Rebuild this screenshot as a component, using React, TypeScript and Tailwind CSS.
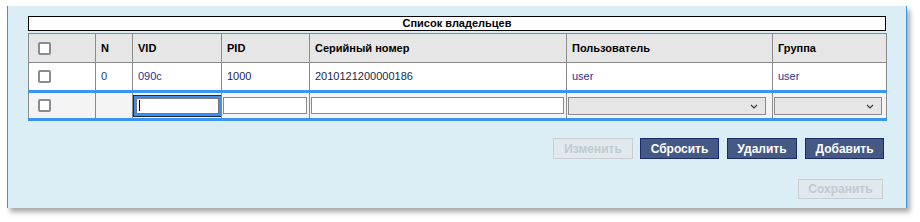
import React from "react";

const cols = [67, 37, 89, 88, 257, 206, 114];

const Checkbox = () => (
  <span className="block w-[13px] h-[13px] rounded-[2px] border-2 border-[#8b8b94] bg-white" />
);

const Chevron = () => (
  <svg
    className="absolute right-[8px] top-[7px] pointer-events-none"
    width="8"
    height="5"
    viewBox="0 0 8 5"
  >
    <path d="M1 1l3 3 3-3" fill="none" stroke="#333" strokeWidth="1.1" />
  </svg>
);

const FakeSelect = ({ w }: { w: number }) => (
  <div className="relative" style={{ width: w }}>
    <select className="block w-full h-[18px] appearance-none bg-[#e6e6e6] border border-[#8a8a8a] text-[11px] outline-none">
      <option></option>
    </select>
    <Chevron />
  </div>
);

export default function App() {
  const th = "border border-[#8a8a8a] text-left font-bold text-[11px] text-black px-[5px] h-[29px]";
  const td = "border border-[#8a8a8a] text-[11px] px-[5px] h-[29px]";
  const blue = "text-[#1a3596]";
  const dark = "text-[#1a1f4a]";
  const edit = "border border-[#8a8a8a] border-t-[3px] border-t-[#3b95ee] border-b-[3px] border-b-[#3b95ee]";

  return (
    <div className="w-[920px] h-[222px] bg-white pt-[6px] pl-[7px]" style={{ fontFamily: '"Liberation Sans", Arial, sans-serif' }}>
      <div className="w-[900px] h-[202px] bg-[#dbedf5] border-l border-r border-[#3a9ad9] shadow-[3px_4px_5px_rgba(0,0,0,0.35)] pt-[10px] px-[20px] flex flex-col">
        <div className="h-[15px] border border-black bg-white flex items-center justify-center text-[11px] font-bold text-black leading-none">
          Список владельцев
        </div>
        <table className="mt-[2px] border-collapse table-fixed w-[858px]">
          <colgroup>
            {cols.map((c, i) => (
              <col key={i} style={{ width: c }} />
            ))}
          </colgroup>
          <thead>
            <tr className="bg-[#e6e6e6]">
              <th className={th + " pl-[9px]"}>
                <Checkbox />
              </th>
              <th className={th}>N</th>
              <th className={th}>VID</th>
              <th className={th}>PID</th>
              <th className={th}>Серийный номер</th>
              <th className={th}>Пользователь</th>
              <th className={th}>Группа</th>
            </tr>
          </thead>
          <tbody>
            <tr className="bg-white">
              <td className={td + " pl-[9px]"}>
                <Checkbox />
              </td>
              <td className={td + " " + blue}>0</td>
              <td className={td + " " + blue}>090c</td>
              <td className={td + " " + dark}>1000</td>
              <td className={td + " " + dark}>2010121200000186</td>
              <td className={td + " " + blue}>user</td>
              <td className={td + " " + blue}>user</td>
            </tr>
            <tr className="bg-[#f5f4f5]">
              <td className={edit + " h-[28px] pl-[9px]"}>
                <Checkbox />
              </td>
              <td className={edit} />
              <td className={edit + " px-[3px]"}>
                <div className="flex items-center w-[83px] h-[16px] bg-white border border-[#7a7a7a] shadow-[0_0_0_2px_#3b8ef0,0_0_0_3px_#1c2a4f] pl-[2px]">
                  <span className="block w-[1px] h-[11px] bg-black" />
                </div>
              </td>
              <td className={edit + " pl-[1px]"}>
                <input className="block w-[84px] h-[17px] bg-white border border-[#8a8a8a] outline-none text-[11px]" />
              </td>
              <td className={edit + " pl-[1px]"}>
                <input className="block w-[253px] h-[17px] bg-white border border-[#8a8a8a] outline-none text-[11px]" />
              </td>
              <td className={edit + " pl-[1px]"}>
                <FakeSelect w={198} />
              </td>
              <td className={edit + " pl-[1px]"}>
                <FakeSelect w={108} />
              </td>
            </tr>
          </tbody>
        </table>
        <div className="mt-[17px] flex justify-end gap-[7px] pr-[2px]">
          <button disabled className="h-[21px] w-[80px] border border-[#c9cdd0] bg-[#dfe9ee] text-[12px] font-bold text-[#c3c9cd]">
            Изменить
          </button>
          <button className="h-[21px] w-[79px] border border-[#1b2a6e] bg-[#445a85] text-[12px] font-bold text-white">
            Сбросить
          </button>
          <button className="h-[21px] w-[70px] border border-[#1b2a6e] bg-[#445a85] text-[12px] font-bold text-white ml-[1px]">
            Удалить
          </button>
          <button className="h-[21px] w-[79px] border border-[#1b2a6e] bg-[#445a85] text-[12px] font-bold text-white ml-[1px]">
            Добавить
          </button>
        </div>
        <div className="mt-[20px] flex justify-end pr-[3px]">
          <button disabled className="h-[20px] w-[85px] border border-[#c9cdd0] bg-[#dfe9ee] text-[12px] font-bold text-[#c3c9cd]">
            Сохранить
          </button>
        </div>
      </div>
    </div>
  );
}
